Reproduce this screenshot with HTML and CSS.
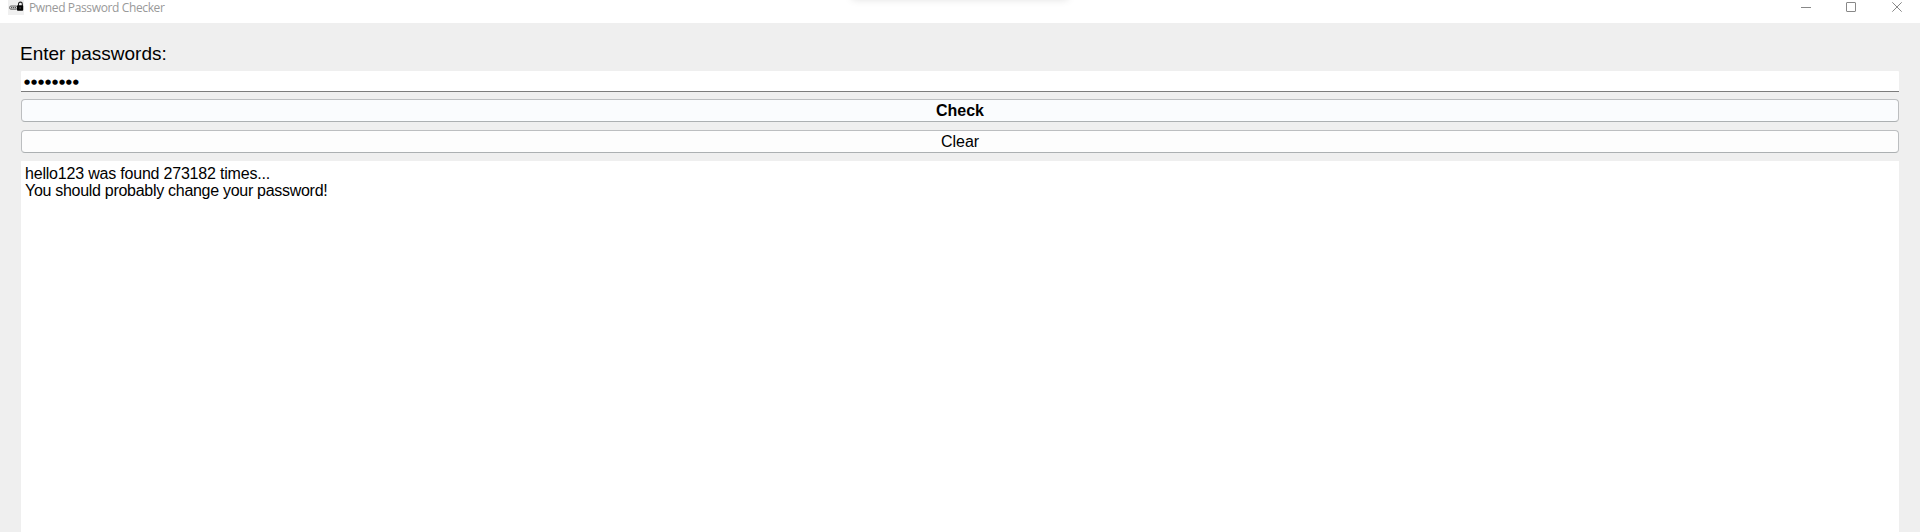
FILE: index.html
```html
<!DOCTYPE html>
<html lang="en">
<head>
<meta charset="utf-8">
<title>Pwned Password Checker</title>
<link rel="stylesheet" href="styles.css">
</head>
<body>
<header class="titlebar">
  <svg class="app-icon" width="16" height="15" viewBox="0 0 16 15">
    <rect width="16" height="15" fill="#f0f0f0"/>
    <rect x="1.5" y="6" width="8" height="3.2" rx="1.5" fill="#ddd" stroke="#666"/>
    <path d="M3 7.6h5" stroke="#555" stroke-width="1.2" stroke-dasharray="1.2 .7"/>
    <path d="M10.5 6V4a1.9 1.9 0 0 1 3.8 0V6" fill="none" stroke="#222" stroke-width="1.1"/>
    <rect x="9" y="5.2" width="6.2" height="5.6" rx=".8" fill="#050505"/>
    <path d="M12.1 7.2v1.5" stroke="#777" stroke-width=".8"/>
  </svg>
  <span class="title">Pwned Password Checker</span>
  <svg class="controls" width="103" height="13" viewBox="0 0 103 13" fill="none" stroke="#888">
    <path d="M0 7.5h10"/>
    <rect x="45.5" y="2.5" width="9" height="9" rx=".5"/>
    <path d="M91.3 2.3l9.4 9.4M100.7 2.3l-9.4 9.4"/>
  </svg>
  <div class="shade"></div>
</header>
<main class="content">
  <label class="label" for="password">Enter passwords:</label>
  <div class="field" id="password"><span class="dots">●●●●●●●●</span></div>
  <button class="button primary">Check</button>
  <button class="button">Clear</button>
  <div class="output"><p class="line first">hello123 was found 273182 times...</p><p class="line">You should probably change your password!</p></div>
</main>
</body>
</html>
```
FILE: styles.css
```css
* { box-sizing: border-box; }
body {
  margin: 0;
  height: 532px;
  overflow: hidden;
  display: flex;
  flex-direction: column;
  background: #efefef;
  color: #000;
  font-family: "Liberation Sans", Arial, sans-serif;
}
.titlebar {
  position: relative;
  flex: none;
  height: 23px;
  padding: 0 16px 0 8px;
  display: flex;
  align-items: flex-start;
  background: #fff;
  overflow: hidden;
}
.app-icon { flex: none; }
.title {
  margin-left: 5px;
  font: 12px/16px "Open Sans", "Noto Sans", sans-serif;
  letter-spacing: -.37px;
  color: #999;
  white-space: nowrap;
}
.controls { margin-left: auto; }
.shade {
  position: absolute;
  top: -10px;
  left: 852px;
  width: 216px;
  height: 9px;
  box-shadow: 0 0 8px rgba(0, 0, 0, .14);
}
.content {
  flex: 1;
  display: flex;
  flex-direction: column;
  padding: 18px 21px 0;
}
.label {
  height: 30px;
  margin-left: -1px;
  font-size: 19px;
  line-height: 25px;
}
.field {
  height: 21px;
  margin-bottom: 7px;
  padding-left: 3px;
  background: #fff;
  border-bottom: 1px solid #7c7c7c;
  border-radius: 1px 1px 0 0;
}
.dots {
  display: block;
  font: 7px/23px "DejaVu Sans", sans-serif;
  letter-spacing: .87px;
}
.button {
  height: 23px;
  margin: 0 0 8px;
  padding: 0;
  border: 1px solid #bcbec0;
  border-bottom-color: #acb0b2;
  border-radius: 4px;
  background: #fdfdfd;
  font: 16px/21px "Liberation Sans", Arial, sans-serif;
  color: #000;
}
.primary { background: #fafcfe; font-weight: bold; }
.output {
  flex: 1;
  padding: 4px;
  background: #fff;
}
.line {
  margin: 0;
  font-size: 16px;
  line-height: 17px;
  letter-spacing: -.29px;
}
.first { letter-spacing: -.2px; }
```
